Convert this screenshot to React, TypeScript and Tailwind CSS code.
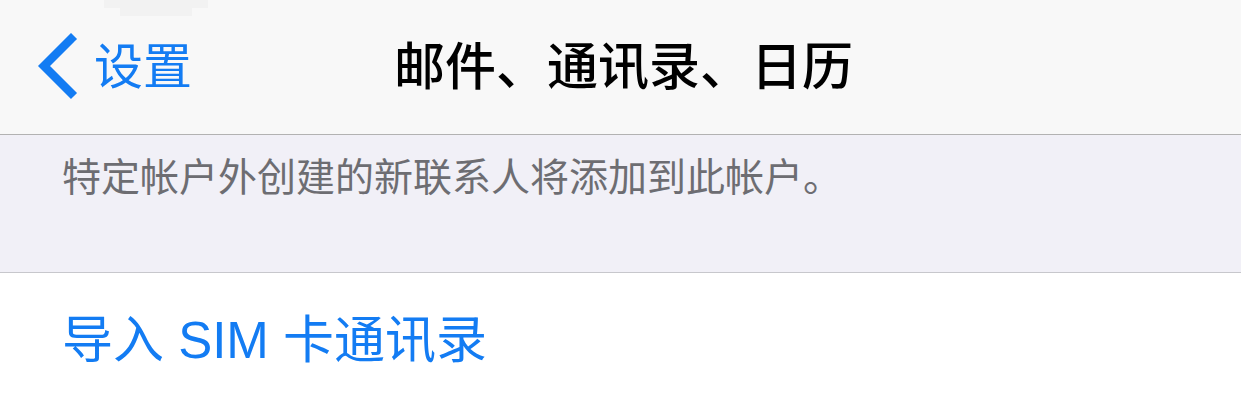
import React from "react";

const font = { fontFamily: '"Liberation Sans", "Noto Sans CJK SC", sans-serif' };

export default function App() {
  return (
    <div className="w-[1241px] h-[402px] overflow-hidden bg-white" style={font}>
      <div className="relative h-[134px] bg-[#f8f8f8] grid grid-cols-[1fr_auto_1fr] items-center">
        <div className="pointer-events-none absolute left-[104px] top-0 w-[104px] h-[8px] bg-[#f2f2f2]" />
        <div className="pointer-events-none absolute left-[120px] top-[8px] w-[72px] h-[8px] bg-[#f2f2f2]" />
        <div className="flex items-center pl-[33px]">
          <svg width="46" height="68" viewBox="0 0 46 68" className="shrink-0">
            <polyline points="38,6 11,33 38,60" fill="none" stroke="#137cf3" strokeWidth="8.5" strokeLinecap="square" strokeLinejoin="miter" />
          </svg>
          <span className="ml-[15px] text-[49px] leading-none text-[#137cf3]">设置</span>
        </div>
        <div className="pl-[6px] text-[51px] leading-none font-medium text-black">邮件、通讯录、日历</div>
        <div />
      </div>
      <div className="h-px bg-[#b2b2b2]" />
      <div className="h-[137px] bg-[#f1f0f7] pl-[62px] pt-[20px]">
        <div className="text-[39px] leading-[46px] text-[#6d6d72]">特定帐户外创建的新联系人将添加到此帐户。</div>
      </div>
      <div className="h-px bg-[#c7c7cc]" />
      <div className="h-[134px] flex items-center pl-[62px] bg-white">
        <span className="text-[51px] leading-none text-[#137cf3]">导入 SIM 卡通讯录</span>
      </div>
    </div>
  );
}
